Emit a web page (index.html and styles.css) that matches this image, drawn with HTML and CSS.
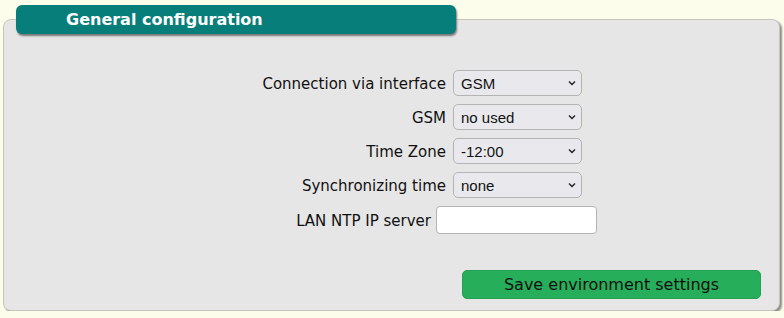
FILE: index.html
```html
<!DOCTYPE html>
<html lang="en">
<head>
<meta charset="utf-8">
<title>General configuration</title>
<link rel="stylesheet" href="styles.css">
</head>
<body>
<div class="page">
  <section class="panel">
    <h2 class="tab">General configuration</h2>
    <form class="form">
      <div class="row">
        <label class="lbl" for="iface">Connection via interface</label>
        <div class="sel-wrap">
          <select id="iface" class="sel"><option>GSM</option><option>LAN</option></select>
          <svg class="chev" width="8" height="6" viewBox="0 0 8 6"><path d="M1 1.5 L4 4.5 L7 1.5" fill="none" stroke="#222" stroke-width="1.4"/></svg>
        </div>
      </div>
      <div class="row">
        <label class="lbl" for="gsm">GSM</label>
        <div class="sel-wrap">
          <select id="gsm" class="sel"><option>no used</option></select>
          <svg class="chev" width="8" height="6" viewBox="0 0 8 6"><path d="M1 1.5 L4 4.5 L7 1.5" fill="none" stroke="#222" stroke-width="1.4"/></svg>
        </div>
      </div>
      <div class="row">
        <label class="lbl" for="tz">Time Zone</label>
        <div class="sel-wrap">
          <select id="tz" class="sel"><option>-12:00</option></select>
          <svg class="chev" width="8" height="6" viewBox="0 0 8 6"><path d="M1 1.5 L4 4.5 L7 1.5" fill="none" stroke="#222" stroke-width="1.4"/></svg>
        </div>
      </div>
      <div class="row">
        <label class="lbl" for="sync">Synchronizing time</label>
        <div class="sel-wrap">
          <select id="sync" class="sel"><option>none</option></select>
          <svg class="chev" width="8" height="6" viewBox="0 0 8 6"><path d="M1 1.5 L4 4.5 L7 1.5" fill="none" stroke="#222" stroke-width="1.4"/></svg>
        </div>
      </div>
      <div class="row row-input">
        <label class="lbl" for="ntp">LAN NTP IP server</label>
        <input id="ntp" class="txt" type="text">
      </div>
      <div class="actions">
        <button type="button" class="btn">Save environment settings</button>
      </div>
    </form>
  </section>
</div>
</body>
</html>
```
FILE: styles.css
```css
html, body {
  margin: 0;
  padding: 0;
  background: #fdfdec;
}
body {
  font-family: "DejaVu Sans", Verdana, sans-serif;
  color: #111;
}
.page {
  padding: 19px 0 0 3px;
  width: 777px;
}
.panel {
  position: relative;
  box-sizing: border-box;
  height: 292px;
  background: #e6e6e6;
  border: 1px solid #c4c4bc;
  border-radius: 8px;
  box-shadow: 2px 2px 2px #8e8e88;
}
.tab {
  position: absolute;
  left: 12px;
  top: -15px;
  box-sizing: border-box;
  width: 440px;
  height: 29px;
  margin: 0;
  padding: 0 0 0 50px;
  background: #077e79;
  border-radius: 6px;
  box-shadow: 1px 2px 2px #777;
  color: #fff;
  font-size: 16px;
  font-weight: bold;
  line-height: 29px;
}
.form {
  display: flex;
  flex-direction: column;
  gap: 8px;
  padding: 50px 0 0 0;
}
.row {
  display: flex;
  align-items: center;
  height: 26px;
}
.lbl {
  box-sizing: border-box;
  width: 449px;
  padding: 1px 7px 0 0;
  text-align: right;
  font-size: 15px;
}
.sel-wrap {
  position: relative;
  width: 129px;
  height: 26px;
}
.sel {
  appearance: none;
  -webkit-appearance: none;
  box-sizing: border-box;
  width: 129px;
  height: 26px;
  margin: 0;
  padding: 0 0 0 7px;
  background: #e9e9ed;
  border: 1px solid #b4b4b4;
  border-radius: 5px;
  font-family: "Liberation Sans", Arial, sans-serif;
  font-size: 15px;
  color: #111;
}
.chev {
  position: absolute;
  right: 6px;
  top: 10px;
  pointer-events: none;
}
.row-input {
  height: 28px;
}
.row-input .lbl {
  width: 432px;
  padding-right: 5px;
}
.txt {
  box-sizing: border-box;
  width: 161px;
  height: 28px;
  margin: 0;
  padding: 0 6px;
  background: #fff;
  border: 1px solid #b4b4b4;
  border-radius: 4px;
  font-size: 14px;
}
.actions {
  display: flex;
  justify-content: flex-end;
  padding: 28px 18px 0 0;
}
.btn {
  box-sizing: border-box;
  width: 299px;
  height: 29px;
  margin: 0;
  background: #27ae5a;
  border: 1px solid #23a052;
  border-radius: 5px;
  font-family: "DejaVu Sans", Verdana, sans-serif;
  font-size: 16px;
  color: #111;
}
```
